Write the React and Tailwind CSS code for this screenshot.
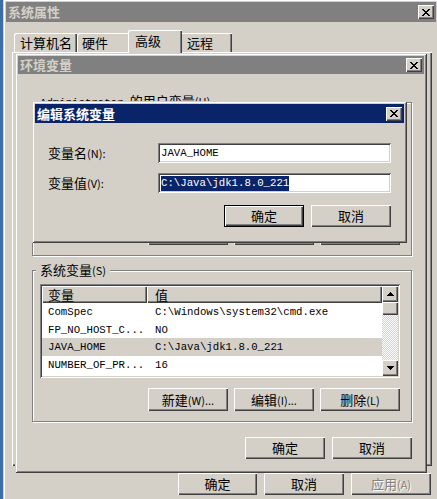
import React from "react";

const RAISED = "shadow-[inset_1px_1px_#ffffff,inset_-1px_-1px_#404040,inset_-2px_-2px_#808080]";
const WIN = "shadow-[inset_1px_1px_#d4d0c8,inset_-1px_-1px_#404040,inset_2px_2px_#ffffff,inset_-2px_-2px_#808080]";
const SUNKEN = "shadow-[inset_1px_1px_#808080,inset_-1px_-1px_#ffffff,inset_2px_2px_#404040,inset_-2px_-2px_#d4d0c8]";
const TAB = "shadow-[inset_1px_1px_#ffffff,inset_-1px_0_#404040,inset_-2px_0_#808080]";
const MONO = "font-['Liberation_Mono','Noto_Sans_CJK_SC',monospace]";

function XGlyph() {
  const r = [
    [0, 0, 2], [6, 0, 2], [1, 1, 2], [5, 1, 2], [2, 2, 4], [3, 3, 2],
    [2, 4, 4], [1, 5, 2], [5, 5, 2], [0, 6, 2], [6, 6, 2],
  ];
  return (
    <svg width="8" height="7" viewBox="0 0 8 7" shapeRendering="crispEdges">
      {r.map(([x, y, w], i) => (
        <rect key={i} x={x} y={y} width={w} height={1} fill="#000" />
      ))}
    </svg>
  );
}

function Arrow({ down }) {
  const r = [[3, 1], [2, 3], [1, 5], [0, 7]];
  const rows = down ? [...r].reverse() : r;
  return (
    <svg width="7" height="4" viewBox="0 0 7 4" shapeRendering="crispEdges">
      {rows.map(([x, w], i) => (
        <rect key={i} x={x} y={i} width={w} height={1} fill="#000" />
      ))}
    </svg>
  );
}

function CloseBtn() {
  return (
    <div className={`w-[16px] h-[14px] bg-[#d4d0c8] ${RAISED} flex items-center justify-center`}>
      <XGlyph />
    </div>
  );
}

function TitleBar({ title, active, h }) {
  return (
    <div
      className={`flex items-center justify-between pl-[2px] pr-[2px] ${h} ${
        active ? "bg-[#0a246a] text-white" : "bg-[#808080] text-[#d4d0c8]"
      }`}
    >
      <span className="font-bold text-[13px] leading-[14px]">{title}</span>
      <CloseBtn />
    </div>
  );
}

function Btn({ children, w, h, def, disabled }) {
  return (
    <div
      className={`flex items-center justify-center bg-[#d4d0c8] ${RAISED} ${w} ${h} ${
        def ? "border border-black" : ""
      } ${disabled ? "text-[#808080] [text-shadow:1px_1px_#ffffff]" : ""}`}
    >
      {children}
    </div>
  );
}

function Group({ label, className, labelClass, children }) {
  return (
    <div className={`relative pt-[7px] ${className}`}>
      <div className="h-full border border-[#808080] shadow-[inset_1px_1px_#ffffff,1px_1px_#ffffff] flex flex-col">
        {children}
      </div>
      <span className={`absolute left-[4px] px-[4px] bg-[#d4d0c8] leading-[14px] whitespace-nowrap ${labelClass}`}>
        {label}
      </span>
    </div>
  );
}

function Scrollbar() {
  return (
    <div className="w-[16px] flex flex-col">
      <div className={`h-[16px] bg-[#d4d0c8] ${RAISED} flex items-center justify-center`}>
        <Arrow />
      </div>
      <div className={`h-[13px] bg-[#d4d0c8] ${RAISED}`} />
      <div className="flex-1 bg-[repeating-conic-gradient(#ffffff_0_25%,#d4d0c8_0_50%)] bg-[length:2px_2px]" />
      <div className={`h-[16px] bg-[#d4d0c8] ${RAISED} flex items-center justify-center`}>
        <Arrow down />
      </div>
    </div>
  );
}

const sysRows = [
  { n: "ComSpec", v: "C:\\Windows\\system32\\cmd.exe", h: "h-[18px]", sel: false },
  { n: "FP_NO_HOST_C...", v: "NO", h: "h-[17px]", sel: false },
  { n: "JAVA_HOME", v: "C:\\Java\\jdk1.8.0_221", h: "h-[18px]", sel: true },
  { n: "NUMBER_OF_PR...", v: "16", h: "h-[17px]", sel: false },
];

function VarList({ rows }) {
  return (
    <div className={`w-[360px] h-[94px] bg-white ${SUNKEN} p-[2px] flex`}>
      <div className="flex-1 flex flex-col">
        <div className="flex h-[17px]">
          <div className={`w-[105px] bg-[#d4d0c8] ${RAISED} pl-[6px] flex items-center`}>变量</div>
          <div className={`flex-1 bg-[#d4d0c8] ${RAISED} pl-[8px] flex items-center`}>值</div>
        </div>
        {rows.map((r) => (
          <div
            key={r.n}
            className={`flex items-center ${r.h} ${r.sel ? "bg-[#d4d0c8]" : ""} ${MONO} text-[10.7px]`}
          >
            <span className="w-[105px] pl-[6px]">{r.n}</span>
            <span className="pl-[8px]">{r.v}</span>
          </div>
        ))}
      </div>
      <Scrollbar />
    </div>
  );
}

const sm = "text-[11px]";

export default function App() {
  return (
    <div className="relative w-[437px] h-[499px] overflow-hidden bg-[#3a6ea5] font-['Noto_Sans_CJK_SC',sans-serif] text-[13px] leading-[14px] text-black">
      {/* 系统属性 */}
      <div className={`absolute left-[3px] top-[-1px] w-[436px] h-[520px] p-[3px] bg-[#d4d0c8] ${WIN} flex flex-col`}>
        <TitleBar title="系统属性" h="h-[20px]" />
        <div className="relative z-10 mt-[8px] ml-[6px] pl-[2px] flex items-end h-[22px]">
          <div className={`w-[63px] h-[19px] ${TAB} rounded-tl-[2px] pl-[6px] flex items-center`}>计算机名</div>
          <div className={`w-[53px] h-[19px] ${TAB} rounded-tl-[2px] pl-[5px] flex items-center`}>硬件</div>
          <div className={`relative z-10 w-[54px] h-[23px] -mb-[1px] -mx-[2px] bg-[#d4d0c8] ${TAB} rounded-tl-[2px] pl-[7px] pb-[2px] flex items-center`}>高级</div>
          <div className={`w-[52px] h-[19px] ${TAB} rounded-tl-[2px] pl-[7px] flex items-center`}>远程</div>
        </div>
        <div className={`ml-[6px] w-[420px] h-[414px] ${RAISED}`} />
        <div className="mt-[7px] ml-[6px] w-[420px] pr-[1px] flex justify-end gap-[7px]">
          <Btn w="w-[79px]" h="h-[22px]">确定</Btn>
          <Btn w="w-[80px]" h="h-[22px]">取消</Btn>
          <Btn w="w-[80px]" h="h-[22px]" disabled>
            应用<span className={sm}>(A)</span>
          </Btn>
        </div>
      </div>

      {/* 环境变量 */}
      <div className={`absolute left-[15px] top-[53px] w-[412px] h-[420px] p-[3px] bg-[#d4d0c8] ${WIN} flex flex-col`}>
        <TitleBar title="环境变量" h="h-[18px]" />
        <div className="flex flex-col pl-[14px] pr-[12px]">
          <Group
            className="mt-[21px] h-[161px]"
            labelClass="top-[-1px]"
            label={
              <>
                <span className={`${MONO} text-[10.7px]`}>Administrator </span>的用户变量<span className={sm}>(U)</span>
              </>
            }
          >
            <div className="pt-[13px] pl-[7px]">
              <VarList rows={[]} />
            </div>
            <div className="mt-[12px] pr-[11px] flex justify-end gap-[6px]">
              <Btn w="w-[80px]" h="h-[23px]">新建</Btn>
              <Btn w="w-[80px]" h="h-[23px]">编辑</Btn>
              <Btn w="w-[80px]" h="h-[23px]">删除</Btn>
            </div>
          </Group>
          <Group
            className="mt-[7px] h-[159px]"
            labelClass="top-0"
            label={
              <>
                系统变量<span className={sm}>(S)</span>
              </>
            }
          >
            <div className="pt-[13px] pl-[7px]">
              <VarList rows={sysRows} />
            </div>
            <div className="mt-[10px] pr-[11px] flex justify-end gap-[6px]">
              <Btn w="w-[80px]" h="h-[23px]">
                新建<span className={sm}>(W)...</span>
              </Btn>
              <Btn w="w-[80px]" h="h-[23px]">
                编辑<span className={sm}>(I)...</span>
              </Btn>
              <Btn w="w-[80px]" h="h-[23px]">
                删除<span className={sm}>(L)</span>
              </Btn>
            </div>
          </Group>
          <div className="mt-[15px] flex justify-end gap-[7px]">
            <Btn w="w-[80px]" h="h-[22px]">确定</Btn>
            <Btn w="w-[80px]" h="h-[22px]">取消</Btn>
          </div>
        </div>
      </div>

      {/* 编辑系统变量 */}
      <div className={`absolute left-[32px] top-[101px] w-[375px] h-[142px] p-[3px] bg-[#d4d0c8] ${WIN} flex flex-col`}>
        <TitleBar active title="编辑系统变量" h="h-[19px]" />
        <div className="flex flex-col px-[13px]">
          <div className="mt-[20px] h-[20px] flex items-center">
            <span>
              变量名<span className={sm}>(N):</span>
            </span>
            <div className={`ml-auto w-[233px] h-[20px] bg-white ${SUNKEN} pl-[3px] flex items-center ${MONO} text-[10.7px]`}>
              JAVA_HOME
            </div>
          </div>
          <div className="mt-[10px] h-[20px] flex items-center">
            <span>
              变量值<span className={sm}>(V):</span>
            </span>
            <div className={`ml-auto w-[233px] h-[20px] bg-white ${SUNKEN} pl-[3px] flex items-center ${MONO} text-[10.7px]`}>
              <span className="bg-[#0a246a] text-white leading-[15px]">C:\Java\jdk1.8.0_221</span>
            </div>
          </div>
          <div className="mt-[12px] flex justify-end gap-[7px]">
            <Btn w="w-[80px]" h="h-[22px]" def>确定</Btn>
            <Btn w="w-[80px]" h="h-[22px]">取消</Btn>
          </div>
        </div>
      </div>
    </div>
  );
}
